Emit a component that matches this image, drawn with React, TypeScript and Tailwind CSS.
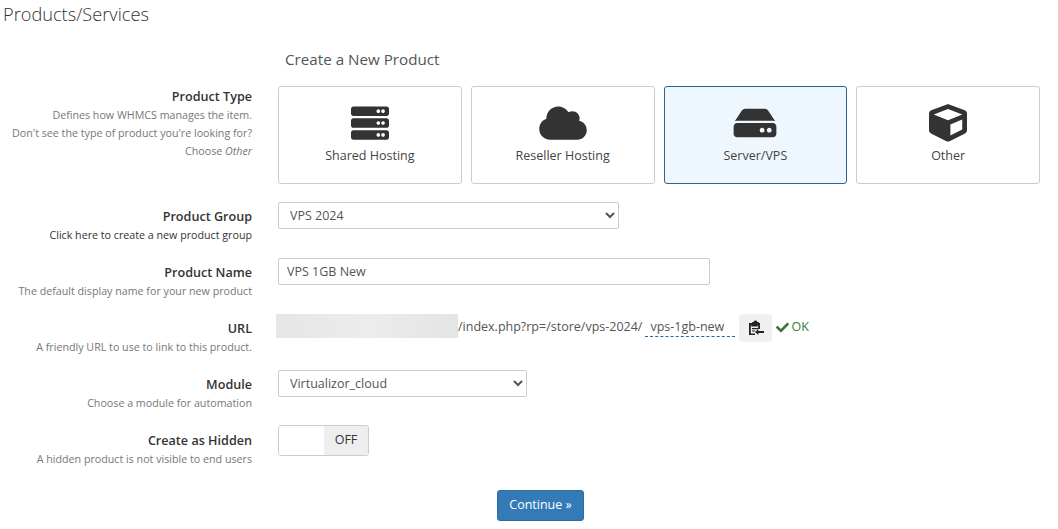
import type { ReactNode } from "react";
import { FaServer, FaCloud, FaHdd, FaCube, FaCheck } from "react-icons/fa";

const cards = [
  { label: "Shared Hosting", Icon: FaServer, active: false },
  { label: "Reseller Hosting", Icon: FaCloud, active: false },
  { label: "Server/VPS", Icon: FaHdd, active: true },
  { label: "Other", Icon: FaCube, active: false },
];

function Label({ title, hint, hintClass, top }: { title: string; hint: ReactNode; hintClass?: string; top?: string }) {
  return (
    <div className={"w-[252px] shrink-0 text-right " + (top ?? "pt-[5px]")}>
      <div className="text-[12.6px] leading-[19px] font-semibold text-[#333]">{title}</div>
      <div className={"text-[10.7px] leading-[19px] " + (hintClass ?? "text-[#777]")}>{hint}</div>
    </div>
  );
}

function ClipboardArrow() {
  return (
    <svg viewBox="0 0 16 16" className="w-[16px] h-[16px]" fill="none">
      <path d="M1 3h3.2V2h1.4a2 2 0 0 1 3.8 0h1.4v1H12v6h-1.8V4.8h-.4V6.4H3.2V4.8h-.4v8.6H7V15H1V3z" fill="#222" />
      <path d="M4 8h6v1.2H4zM4 10.4h3v1.2H4z" fill="#222" />
      <path d="M16 11H10.4V9L7 12l3.4 3v-2H16z" fill="#222" />
    </svg>
  );
}

export default function App() {
  return (
    <div className="w-[1058px] h-[529px] overflow-hidden bg-white text-[#333] font-['Open_Sans',sans-serif]">
      <h1 className="pl-[3px] pt-[2px] text-[18.2px] leading-[25px] font-light text-[#333]">Products/Services</h1>
      <h2 className="ml-[285px] mt-[20px] text-[15.2px] leading-[24px] font-normal text-[#555]">Create a New Product</h2>

      <div className="flex mt-[15px]">
        <div className="w-[252px] shrink-0 text-right pt-[1px]">
          <div className="text-[12.6px] leading-[19px] font-semibold text-[#333]">Product Type</div>
          <div className="text-[10.7px] leading-[18px] text-[#777]">
            Defines how WHMCS manages the item.<br />
            Don't see the type of product you're looking for?<br />
            Choose <em>Other</em>
          </div>
        </div>
        <div className="ml-[26px] w-[762px] grid grid-cols-4 gap-[9px]">
          {cards.map(({ label, Icon, active }) => (
            <div
              key={label}
              className={
                "h-[98px] rounded-[3px] border flex flex-col items-center pt-[17px] " +
                (active ? "border-[#2a6496] bg-[#eff7fe]" : "border-[#ccc] bg-white")
              }
            >
              <Icon className="w-[48px] h-[38px] text-[#333]" />
              <div className="mt-[5px] text-[12.5px] leading-[18px] text-[#444]">{label}</div>
            </div>
          ))}
        </div>
      </div>

      <div className="flex h-[56px] mt-[18px]">
        <Label title="Product Group" hint="Click here to create a new product group" hintClass="text-[#333]" />
        <div className="ml-[26px]">
          <select className="block w-[341px] h-[27px] border border-[#ccc] rounded-[2px] bg-white pl-[7px] text-[12.5px] text-[#555] outline-none">
            <option>VPS 2024</option>
          </select>
        </div>
      </div>

      <div className="flex h-[56px]">
        <Label title="Product Name" hint="The default display name for your new product" />
        <div className="ml-[26px]">
          <input
            readOnly
            value="VPS 1GB New"
            className="block w-[432px] h-[27px] border border-[#ccc] rounded-[2px] bg-white px-[8px] text-[12.5px] text-[#555] outline-none"
          />
        </div>
      </div>

      <div className="flex h-[56px]">
        <Label title="URL" hint="A friendly URL to use to link to this product." />
        <div className="ml-[24px] flex items-center h-[28px] text-[12.5px] text-[#555]">
          <div className="w-[182px] h-[24px] self-start bg-[linear-gradient(90deg,#e6e6e6,#ececec_50%,#e4e4e4)]" />
          <span className="mb-[2px]">/index.php?rp=/store/vps-2024/</span>
          <span className="ml-[3px] mb-[2px] w-[90px] h-[20px] leading-[20px] pl-[5px] border-b border-dashed border-[#2a6496]">vps-1gb-new</span>
          <button className="ml-[4px] w-[33px] h-[28px] rounded-[3px] bg-[#f0f0f0] flex items-center justify-center">
            <ClipboardArrow />
          </button>
          <FaCheck className="ml-[4px] mb-[2px] w-[13px] h-[13px] text-[#3c763d]" />
          <span className="ml-[2px] mb-[2px] text-[#3c763d]">OK</span>
        </div>
      </div>

      <div className="flex h-[55px]">
        <Label title="Module" hint="Choose a module for automation" />
        <div className="ml-[26px]">
          <select className="block w-[249px] h-[27px] border border-[#ccc] rounded-[2px] bg-white pl-[7px] text-[12.5px] text-[#555] outline-none">
            <option>Virtualizor_cloud</option>
          </select>
        </div>
      </div>

      <div className="flex h-[65px]">
        <Label top="pt-[6px]" title="Create as Hidden" hint="A hidden product is not visible to end users" />
        <div className="ml-[26px] flex w-[91px] h-[31px] rounded-[3px] border border-[#ccc] overflow-hidden">
          <div className="w-[45px] bg-white" />
          <div className="flex-1 bg-[#eeeeee] flex items-center justify-center text-[12.5px] text-[#333]">OFF</div>
        </div>
      </div>

      <div className="flex justify-center pl-[23px]">
        <button className="w-[87px] h-[31px] rounded-[3px] bg-[#337ab7] border border-[#2e6da4] text-white text-[12.5px]">Continue »</button>
      </div>
    </div>
  );
}
